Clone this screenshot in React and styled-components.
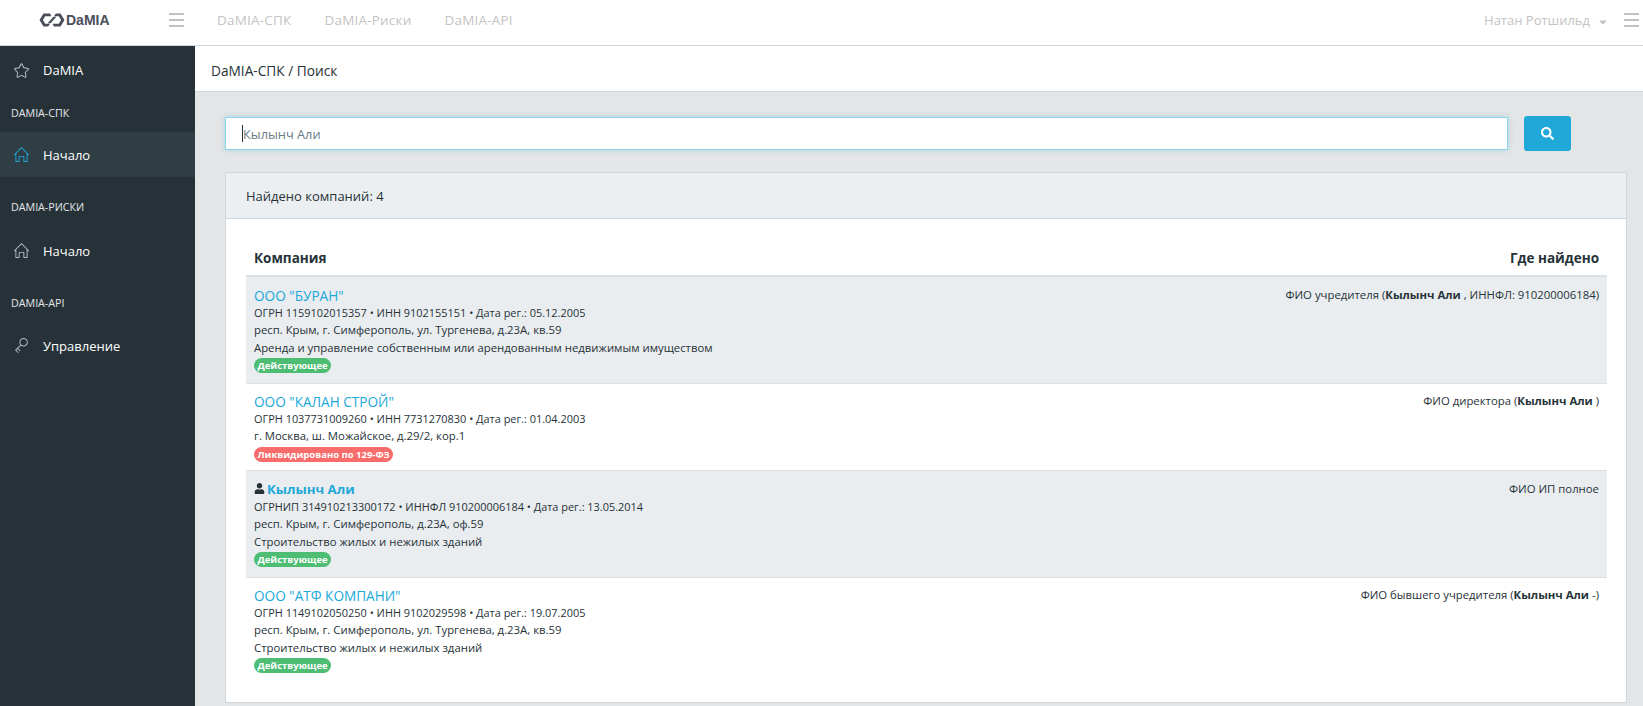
import React from "react";
import styled, { createGlobalStyle } from "styled-components";
import { FaSearch, FaUser, FaCaretDown } from "react-icons/fa";
import { SlHome, SlKey, SlStar } from "react-icons/sl";

const GlobalStyle = createGlobalStyle`
  html, body {
    margin: 0;
    height: 100%;
    overflow: hidden;
    background: #e4e5e6;
    font-family: "Open Sans", "Noto Sans", sans-serif;
    font-size: 13px;
    color: #263238;
  }
  * {
    box-sizing: border-box;
  }
`;

const Header = styled.header`
  height: 46px;
  background: #fff;
  border-bottom: 1px solid #cfd8dc;
  display: flex;
  align-items: center;
  padding-bottom: 5px;
`;

const Brand = styled.div`
  width: 169px;
  padding-left: 39px;
  display: flex;
  align-items: center;
  gap: 1px;
  flex: none;
`;

const BrandName = styled.span`
  font-family: "Liberation Sans", sans-serif;
  font-weight: 700;
  font-size: 14px;
  color: #4a4d5a;
`;

const Burger = styled.div`
  width: 15px;
  height: 14px;
  display: flex;
  flex-direction: column;
  justify-content: space-between;
  flex: none;

  span {
    height: 2px;
    background: #c2c2c2;
  }
`;

const TopNav = styled.nav`
  display: flex;
  align-items: center;
  gap: 33px;
  margin-left: 33px;
  flex: 1;
`;

const TopLink = styled.a`
  color: #c4c4c4;
  font-size: 13.5px;
  letter-spacing: 0.2px;
`;

const UserMenu = styled.div`
  display: flex;
  align-items: center;
  padding-right: 4px;
  color: #c4c4c4;
  font-size: 13px;

  svg {
    margin: 3px 15px 0 7px;
    font-size: 12px;
  }
`;

const Body = styled.div`
  display: flex;
  height: 660px;
`;

const Sidebar = styled.aside`
  width: 195px;
  flex: none;
  background: #263238;
  color: #fff;
`;

const NavItem = styled.a`
  display: flex;
  align-items: center;
  height: ${(p) => p.$height || 45}px;
  padding-left: 14px;
  font-size: 13px;
  color: #fff;
  background: ${(p) => (p.$active ? "#2f3e45" : "transparent")};

  svg {
    width: 15px;
    height: 15px;
    margin-right: 14px;
    color: ${(p) => (p.$active ? "#20a8d8" : "#b0bec5")};
  }
`;

const NavTitle = styled.div`
  font-size: 10.7px;
  font-weight: 500;
  color: #e4e7ea;
  padding: ${(p) => p.$top || 0}px 0 0 11px;
  height: ${(p) => p.$height}px;
  display: flex;
  align-items: center;
`;

const Main = styled.main`
  flex: 1;
  min-width: 0;
`;

const Breadcrumb = styled.div`
  height: 46px;
  background: #fff;
  border-bottom: 1px solid #cfd8dc;
  padding: 3px 0 0 16px;
  display: flex;
  align-items: center;
  font-size: 13.7px;
  color: #263238;
`;

const Content = styled.div`
  padding: 24px 16px 0 30px;
`;

const SearchRow = styled.div`
  display: flex;
  align-items: center;
  margin-bottom: 21px;
`;

const SearchBox = styled.div`
  width: 1283px;
  height: 33px;
  background: #fff;
  border: 1px solid #8ad4ee;
  box-shadow: 0 0 6px rgba(32, 168, 216, 0.3);
  display: flex;
  align-items: center;
  padding-left: 16px;
  color: #6b7b84;
  font-size: 12.8px;
`;

const Caret = styled.span`
  width: 1px;
  height: 17px;
  background: #263238;
`;

const SearchButton = styled.button`
  width: 47px;
  height: 35px;
  margin-left: 16px;
  background: #20a8d8;
  border: 0;
  border-radius: 3px;
  color: #fff;
  display: flex;
  align-items: center;
  justify-content: center;
  font-size: 13px;
  padding: 0;
`;

const Card = styled.section`
  background: #fff;
  border: 1px solid #cfd8dc;
`;

const CardHeader = styled.div`
  height: 46px;
  background: #eceff1;
  border-bottom: 1px solid #cfd8dc;
  padding-left: 20px;
  display: flex;
  align-items: center;
  font-size: 13px;
`;

const CardBody = styled.div`
  padding: 20px 19px 20px 20px;
`;

const TableHead = styled.div`
  display: flex;
  justify-content: space-between;
  align-items: center;
  height: 38px;
  padding: 2px 8px 0;
  border-bottom: 2px solid #dde0e2;
  font-weight: 700;
  font-size: 13.5px;
  color: #263238;
`;

const Row = styled.div`
  display: flex;
  justify-content: space-between;
  height: ${(p) => p.$height}px;
  padding: 0 8px;
  background: ${(p) => (p.$shaded ? "#eaedf0" : "#fff")};
  border-bottom: 1px solid #dde0e2;

  &:last-child {
    border-bottom: 0;
  }
`;

const RowInfo = styled.div`
  padding-top: ${(p) => p.$top}px;
  font-size: 11.35px;
  line-height: 17.4px;
  color: #263238;
`;

const MetaLine = styled.div`
  font-size: 10.93px;
`;

const CompanyLink = styled.a`
  display: block;
  color: #20a8d8;
  font-size: ${(p) => (p.$bold ? 13.2 : 13.6)}px;
  line-height: 17px;
  font-weight: ${(p) => (p.$bold ? 700 : 400)};

  svg {
    color: #263238;
    font-size: 11px;
    margin-right: 2px;
  }
`;

const Status = styled.span`
  display: block;
  width: fit-content;
  margin-top: 2px;
  height: 15px;
  line-height: 15px;
  padding: 0 3.5px;
  border-radius: 8px;
  color: #fff;
  font-size: 9.5px;
  font-weight: 700;
  background: ${(p) => (p.$bad ? "#f86c6b" : "#4dbd74")};
`;

const Found = styled.div`
  padding-top: ${(p) => p.$top}px;
  font-size: 11.35px;
  line-height: 17px;
  color: #263238;
  text-align: right;
`;

const Logo = () => (
  <svg width="26" height="14" viewBox="0 0 26 14">
    <path
      d="M11 0.5 H4.5 L0.5 7 L4.5 13.5 H9 L11.2 10.8 H6.2 L3.9 7 L6.2 3.2 H12.4 Z"
      fill="#4a4d5a"
    />
    <path
      d="M15 13.5 H21.5 L25.5 7 L21.5 0.5 H17 L14.8 3.2 H19.8 L22.1 7 L19.8 10.8 H13.6 Z"
      fill="#4a4d5a"
    />
    <path d="M8.6 10.2 L14.4 3.8 H17.4 L11.6 10.2 Z" fill="#4a4d5a" />
  </svg>
);

const rows = [
  {
    name: 'ООО "БУРАН"',
    height: 107,
    top: 10,
    shaded: true,
    meta: "ОГРН 1159102015357 • ИНН 9102155151 • Дата рег.: 05.12.2005",
    lines: [
      "респ. Крым, г. Симферополь, ул. Тургенева, д.23А, кв.59",
      "Аренда и управление собственным или арендованным недвижимым имуществом",
    ],
    status: "Действующее",
    found: ["ФИО учредителя (", "Кылынч Али", " , ИННФЛ: 910200006184)"],
  },
  {
    name: 'ООО "КАЛАН СТРОЙ"',
    height: 87,
    top: 9,
    meta: "ОГРН 1037731009260 • ИНН 7731270830 • Дата рег.: 01.04.2003",
    lines: ["г. Москва, ш. Можайское, д.29/2, кор.1"],
    status: "Ликвидировано по 129-ФЗ",
    bad: true,
    found: ["ФИО директора (", "Кылынч Али", " )"],
  },
  {
    name: "Кылынч Али",
    person: true,
    height: 107,
    top: 10,
    shaded: true,
    meta: "ОГРНИП 314910213300172 • ИННФЛ 910200006184 • Дата рег.: 13.05.2014",
    lines: [
      "респ. Крым, г. Симферополь, д.23А, оф.59",
      "Строительство жилых и нежилых зданий",
    ],
    status: "Действующее",
    found: ["ФИО ИП полное"],
  },
  {
    name: 'ООО "АТФ КОМПАНИ"',
    height: 104,
    top: 9,
    meta: "ОГРН 1149102050250 • ИНН 9102029598 • Дата рег.: 19.07.2005",
    lines: [
      "респ. Крым, г. Симферополь, ул. Тургенева, д.23А, кв.59",
      "Строительство жилых и нежилых зданий",
    ],
    status: "Действующее",
    found: ["ФИО бывшего учредителя (", "Кылынч Али", " -)"],
  },
];

export default function App() {
  return (
    <>
      <GlobalStyle />
      <Header>
        <Brand>
          <Logo />
          <BrandName>DaMIA</BrandName>
        </Brand>
        <Burger>
          <span />
          <span />
          <span />
        </Burger>
        <TopNav>
          <TopLink>DaMIA-СПК</TopLink>
          <TopLink>DaMIA-Риски</TopLink>
          <TopLink>DaMIA-API</TopLink>
        </TopNav>
        <UserMenu>
          Натан Ротшильд
          <FaCaretDown />
          <Burger>
            <span />
            <span />
            <span />
          </Burger>
        </UserMenu>
      </Header>
      <Body>
        <Sidebar>
          <NavItem $height={48}>
            <SlStar />
            DaMIA
          </NavItem>
          <NavTitle $height={38}>DAMIA-СПК</NavTitle>
          <NavItem $active>
            <SlHome />
            Начало
          </NavItem>
          <NavTitle $height={51} $top={9}>
            DAMIA-РИСКИ
          </NavTitle>
          <NavItem>
            <SlHome />
            Начало
          </NavItem>
          <NavTitle $height={50} $top={10}>
            DAMIA-API
          </NavTitle>
          <NavItem>
            <SlKey />
            Управление
          </NavItem>
        </Sidebar>
        <Main>
          <Breadcrumb>DaMIA-СПК / Поиск</Breadcrumb>
          <Content>
            <SearchRow>
              <SearchBox>
                <Caret />
                Кылынч Али
              </SearchBox>
              <SearchButton>
                <FaSearch />
              </SearchButton>
            </SearchRow>
            <Card>
              <CardHeader>Найдено компаний: 4</CardHeader>
              <CardBody>
                <TableHead>
                  <span>Компания</span>
                  <span>Где найдено</span>
                </TableHead>
                {rows.map((r) => (
                  <Row key={r.name} $height={r.height} $shaded={r.shaded}>
                    <RowInfo $top={r.top}>
                      <CompanyLink $bold={r.person}>
                        {r.person && <FaUser />}
                        {r.name}
                      </CompanyLink>
                      <MetaLine>{r.meta}</MetaLine>
                      {r.lines.map((l) => (
                        <div key={l}>{l}</div>
                      ))}
                      <Status $bad={r.bad}>{r.status}</Status>
                    </RowInfo>
                    <Found $top={r.top - 1}>
                      {r.found[0]}
                      {r.found[1] && <b>{r.found[1]}</b>}
                      {r.found[2]}
                    </Found>
                  </Row>
                ))}
              </CardBody>
            </Card>
          </Content>
        </Main>
      </Body>
    </>
  );
}
